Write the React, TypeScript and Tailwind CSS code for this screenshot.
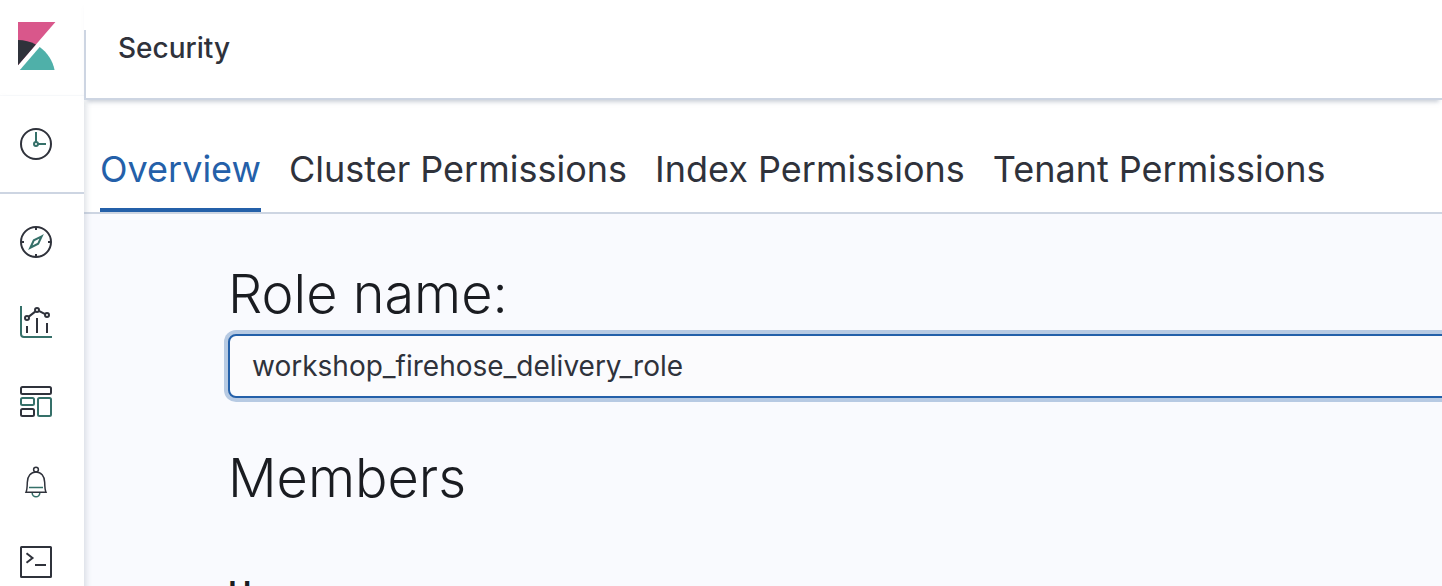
import type { ReactNode } from "react";

const DARK = "#2f323b";
const TEAL = "#357069";

function KibanaLogo() {
  return (
    <svg width="48" height="48" viewBox="0 0 32 32" aria-hidden="true">
      <path fill="#D9578B" d="M4 0v28.8L28.935 0z" />
      <path fill="#2F323B" d="M4 12v16.789l11.906-13.738A24.721 24.721 0 0 0 4 12" />
      <path fill="#4FB0A9" d="M18.479 16.664L6.268 30.754 5.19 31.998h23.198c-1.252-6.292-4.883-11.719-9.909-15.334" />
    </svg>
  );
}

function Icon({ children }: { children: ReactNode }) {
  return (
    <svg width="32" height="32" viewBox="0 0 32 32" fill="none" stroke={DARK} strokeWidth="2" aria-hidden="true">
      {children}
    </svg>
  );
}

const clock = (
  <Icon>
    <circle cx="16" cy="16" r="15" />
    <g stroke={TEAL}>
      <circle cx="16" cy="16" r="2" />
      <path d="M16 14V4M18 16h8" />
    </g>
  </Icon>
);

const compass = (
  <Icon>
    <circle cx="16" cy="16" r="15" />
    <path d="M16 1v3M16 28v3M1 16h3M28 16h3" />
    <path stroke={TEAL} strokeMiterlimit="10" d="M21.700 10.300l-7.900 4-3.500 7.400 7.900-4z" />
  </Icon>
);

const visualize = (
  <Icon>
    <path stroke={TEAL} d="M1 0v28a3 3 0 0 0 3 3h28" />
    <path d="M7 20v7M17 12v15M27 17v10M8.800 10.600l6.400-5M18.900 4.900l6.200 3.200" />
    <circle cx="7" cy="12" r="2" />
    <circle cx="17" cy="4" r="2" />
    <circle cx="27" cy="9" r="2" />
  </Icon>
);

const dashboard = (
  <Icon>
    <rect x="1" y="1" width="30" height="7" rx="1.500" />
    <rect x="1" y="12" width="13" height="7" rx="1.500" stroke={TEAL} />
    <rect x="1" y="23" width="13" height="7" rx="1.500" />
    <rect x="18" y="12" width="13" height="18" rx="1.500" stroke={TEAL} />
  </Icon>
);

const bell = (
  <Icon>
    <g strokeWidth="1.500">
      <circle cx="16" cy="3.600" r="2.400" />
      <path d="M6 26.200c1.200-2.600 1.200-6 1.300-9.700C7.400 10 11 6.100 16 6.100s8.600 3.900 8.700 10.400c.1 3.700.1 7.100 1.300 9.700z" />
      <path stroke={TEAL} d="M9 21.500h14M12.200 27a3.800 3.800 0 0 0 7.600 0" />
    </g>
  </Icon>
);

const devTools = (
  <Icon>
    <rect x="1" y="1" width="30" height="30" rx=".5" />
    <path d="M6.500 7.300l6 4.700-6 4.700M15 19h11" />
  </Icon>
);

const apps = [
  { label: "Discover", icon: compass },
  { label: "Visualize", icon: visualize },
  { label: "Dashboard", icon: dashboard },
  { label: "Alerting", icon: bell },
  { label: "Dev Tools", icon: devTools },
];

const tabs = ["Overview", "Cluster Permissions", "Index Permissions", "Tenant Permissions"];

export default function App() {
  return (
    <div className="flex h-screen overflow-hidden bg-[#f9fafe] font-['Inter',sans-serif] text-[#2f323b]">
      <nav aria-label="Main" className="z-10 flex w-[84px] shrink-0 flex-col">
        <a href="#home" aria-label="Home" className="flex h-24 shrink-0 items-start border-b border-[#f9fafc] bg-white pt-[22px] pl-3">
          <KibanaLogo />
        </a>
        <div className="flex flex-1 flex-col bg-white shadow-[2px_4px_6px_rgba(152,162,179,0.35)]">
          <a href="#recent" aria-label="Recently viewed" className="flex h-[98px] shrink-0 items-center border-b-2 border-[#cdd5e2] pl-5">
            {clock}
          </a>
          <ul className="flex flex-col pt-2">
            {apps.map((app) => (
              <li key={app.label}>
                <a href="#app" aria-label={app.label} className="flex h-20 items-center pl-5">
                  {app.icon}
                </a>
              </li>
            ))}
          </ul>
        </div>
      </nav>

      <div className="flex min-w-0 flex-1 flex-col">
        <header className="z-20 flex h-[100px] shrink-0 border-b-2 border-[#cdd5e2] bg-white pt-[30px] shadow-[0_5px_4px_-3px_rgba(152,162,179,0.5)]">
          <div className="flex flex-1 border-l-2 border-[#cdd5e2] pl-8">
            <span className="text-[28px] leading-9 font-medium">Security</span>
          </div>
        </header>

        <main className="flex-1">
          <div role="tablist" aria-label="Role" className="flex h-[114px] gap-7 border-b-2 border-[#cdd5e2] bg-white pl-4">
            {tabs.map((tab, i) => (
              <button
                key={tab}
                type="button"
                role="tab"
                aria-selected={i === 0}
                className="border-b-4 border-transparent pt-[30px] text-4xl whitespace-nowrap aria-selected:border-[#2460a9] aria-selected:text-[#2460a9]"
              >
                {tab}
              </button>
            ))}
          </div>

          <div className="pt-12 pl-36 text-[#1a1c21]">
            <label htmlFor="role-name" className="block text-[54px] leading-[64px] font-light">
              Role name:
            </label>
            <input
              id="role-name"
              type="text"
              defaultValue="workshop_firehose_delivery_role"
              className="mt-2 -mr-4 block h-16 w-[calc(100%+16px)] rounded-lg border-2 border-[#2460a9] bg-[#fbfbfd] px-[22px] text-[28px] text-[#2f323b] ring-4 ring-[#b7cae3] outline-none"
            />
            <h2 className="mt-12 text-[54px] leading-[64px] font-light">Members</h2>
            <h3 className="mt-16 text-[32px] leading-10 font-semibold">Users</h3>
          </div>
        </main>
      </div>
    </div>
  );
}
